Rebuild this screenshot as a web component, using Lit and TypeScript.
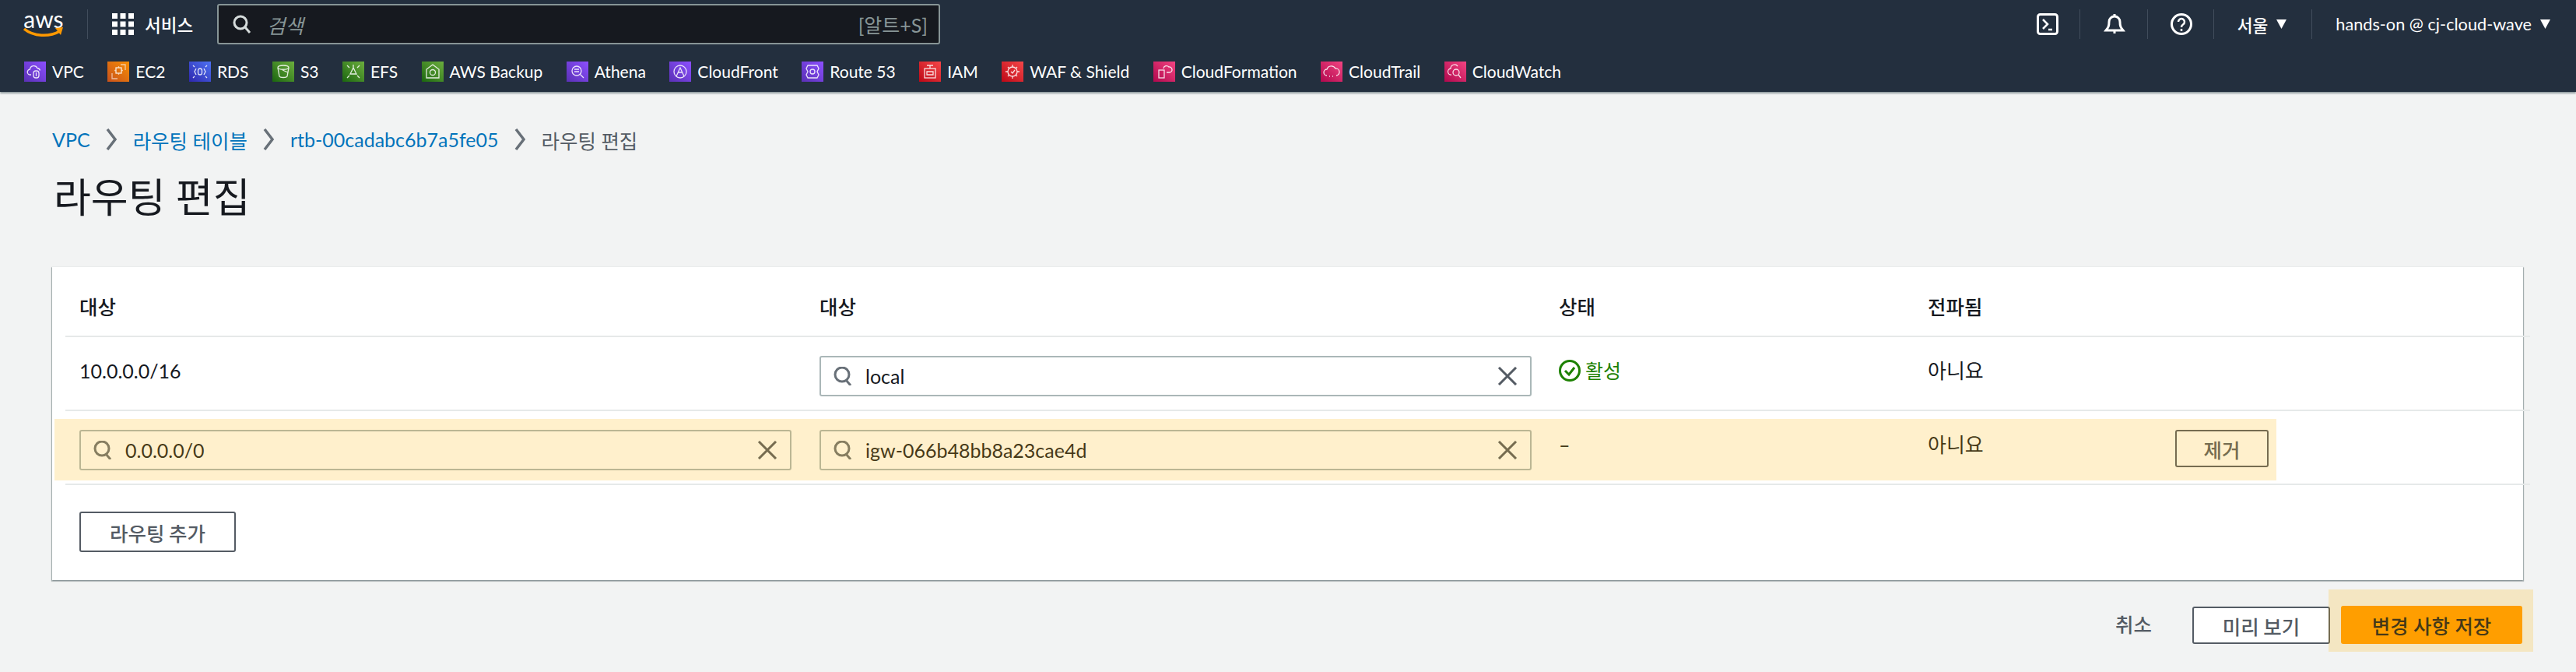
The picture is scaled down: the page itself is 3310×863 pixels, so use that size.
import { LitElement, html, css, svg } from "lit";
import { customElement } from "lit/decorators.js";

const P = ["#8c4fff", "#5a30b5"], O = ["#f78e04", "#c8511b"], B = ["#4d72f3", "#2e27ad"], G = ["#6cae3e", "#1b660f"], R = ["#f54749", "#bd0816"], K = ["#f34482", "#b0084d"];

const glyphs: Record<string, any> = {
  vpc: svg`<path d="M9 17H8a3.5 3.5 0 0 1-.5-7 5 5 0 0 1 9.5-1.5 4 4 0 0 1 3.5 3"/><rect x="12" y="12" width="7" height="9" rx="3"/><path d="M15.5 14v5"/>`,
  ec2: svg`<rect x="11" y="8" width="7" height="7"/><path d="M9 11.500h2M18 11.500h2M14.500 6v2M14.500 15v2M17 4h6v7M6 15v7h7" opacity=".7"/>`,
  rds: svg`<rect x="11.500" y="9" width="5" height="8" rx="2.500"/><path d="M9 9l-2 4 2 4M19 9l2 4-2 4M5 5l2 2M23 5l-2 2M5 21l2-2M23 21l-2-2"/>`,
  s3: svg`<path d="M7 8c0-4 14-4 14 0l-2 11c-1 2-9 2-10 0z"/><path d="M7 8c2 3 12 3 14 0M13 11l7 3"/>`,
  efs: svg`<path d="M14 8l4 8h-8zM14 4v4M6 5l3 3M22 5l-3 3M6 21l3-3M22 21l-3-3"/>`,
  backup: svg`<path d="M14 4l8 6v11H6V10z"/><circle cx="14" cy="14" r="3.500"/>`,
  athena: svg`<circle cx="13" cy="12" r="6"/><path d="M17.500 16.500L22 21M10 10h6M10 13h6"/>`,
  cloudfront: svg`<circle cx="14" cy="13" r="8"/><path d="M9 19l5-11 5 11M11 14h6"/>`,
  route53: svg`<path d="M8 5h12l2 4-2 4 2 4-2 4H8l-2-4 2-4-2-4z"/><circle cx="14" cy="13" r="3"/>`,
  iam: svg`<rect x="7" y="9" width="14" height="12"/><path d="M10 5h8M10 13h8v4h-8zM14 5v4"/>`,
  waf: svg`<circle cx="14" cy="13" r="6"/><path d="M14 4v3M14 19v3M5 13h3M20 13h3M8 7l2 2M20 7l-2 2M8 19l2-2M20 19l-2-2M12 13l2 2 3-4"/>`,
  cfn: svg`<rect x="7" y="11" width="7" height="10"/><path d="M13 9a4 4 0 0 1 7-2 3.500 3.500 0 0 1 1 7h-4"/>`,
  trail: svg`<path d="M8 18a4 4 0 0 1 0-8 6 6 0 0 1 11-1 4.500 4.500 0 0 1 1 9"/><path d="M11 19h1M15 19h1" />`,
  watch: svg`<path d="M9 17a4 4 0 0 1-1-8 5 5 0 0 1 9-3"/><circle cx="15" cy="14" r="4"/><path d="M18 17l3 4"/>`,
};

const services: [string, string, string[]][] = [
  ["VPC", "vpc", P], ["EC2", "ec2", O], ["RDS", "rds", B], ["S3", "s3", G], ["EFS", "efs", G],
  ["AWS Backup", "backup", G], ["Athena", "athena", P], ["CloudFront", "cloudfront", P], ["Route 53", "route53", P],
  ["IAM", "iam", R], ["WAF & Shield", "waf", R], ["CloudFormation", "cfn", K], ["CloudTrail", "trail", K], ["CloudWatch", "watch", K],
];

const searchIcon = html`<svg class="si" viewBox="0 0 26 24"><ellipse cx="11" cy="10" rx="9" ry="9"/><path d="M16 17l6 7"/></svg>`;
const clearIcon = html`<svg class="xi" viewBox="0 0 26 24"><path d="M2 1l22 22M24 1L2 23"/></svg>`;

@customElement("app-root")
export class AppRoot extends LitElement {
  static styles = css`
    :host { display: block; min-height: 863px; background: #f2f3f3; font-family: Lato, "Noto Sans CJK KR", sans-serif; color: #16191f; font-size: 25px; overflow: hidden; }
    header { background: #232f3e; height: 118px; box-shadow: 0 2px 2px rgba(0,28,36,.4); color: #fff; }
    .top { display: flex; align-items: center; height: 62px; }
    .logo { width: 52px; margin-left: 30px; display: flex; flex-direction: column; align-items: center; height: 36px; }
    .logo b { font: 400 30px/22px Lato, sans-serif; color: #fff; }
    .logo svg { width: 52px; height: 13px; }
    .div { width: 1px; height: 38px; background: #414d5c; flex: none; }
    .grid { width: 28px; height: 28px; margin: 0 14px 0 31px; fill: #fff; flex: none; }
    .svc { font-size: 22.500px; width: 64px; margin-right: 29px; font-weight: 500; white-space: nowrap; }
    .search { width: 929px; height: 52px; box-sizing: border-box; background: #16191f; border: 2px solid #879596; border-radius: 3px; display: flex; align-items: center; padding: 0 14px 0 18px; color: #879596; }
    .search svg { width: 24px; height: 24px; fill: none; stroke: #d5dbdb; stroke-width: 3; margin-right: 20px; }
    .search i { flex: 1; font-size: 25.500px; }
    .search span { font-size: 25px; }
    .right { margin-left: auto; display: flex; align-items: center; height: 62px; }
    .ic { width: 28px; height: 28px; fill: none; stroke: #fff; stroke-width: 3; flex: none; }
    .region { font-size: 21.500px; font-weight: 500; display: flex; align-items: center; }
    .user { font-size: 21.700px; display: flex; align-items: center; white-space: nowrap; }
    .tri { width: 13px; height: 12px; fill: #fff; margin-left: 11px; flex: none; }
    .marks { display: flex; align-items: center; height: 26px; margin-top: 17px; padding-left: 31px; gap: 30.500px; }
    .mark { display: flex; align-items: center; gap: 8px; font-size: 21px; line-height: 24px; white-space: nowrap; }
    .mark svg { width: 28px; height: 26px; flex: none; }
    .mark .g { fill: none; stroke: #fff; stroke-width: 1.300; opacity: .85; }
    main { padding: 44px 68px 0 67px; }
    .crumbs { display: flex; align-items: center; height: 34px; font-size: 25.500px; color: #0073bb; }
    .crumbs svg { width: 16px; height: 28px; fill: none; stroke: #687078; stroke-width: 3.500; margin: 0 19.500px; flex: none; }
    .crumbs .now { color: #545b64; }
    .lat { font-size: 25px; }
    h1 { margin: 27px 0 60px 2px; font-size: 52px; line-height: 60px; font-weight: 400; }
    .card { background: #fff; position: relative; height: 402px; box-sizing: border-box; box-shadow: 0 1px 1px 1px rgba(0,28,36,.2), 1px 1px 1px 0 rgba(0,28,36,.15), -1px 1px 1px 0 rgba(0,28,36,.15); }
    .row { display: grid; grid-template-columns: 951px 950px 474px 438px; margin: 0 -9px 0 17px; padding: 24px 0 0 18px; height: 95px; box-sizing: border-box; border-bottom: 2px solid #e6e9e9; }
    .row.head { height: 90px; padding-top: 34px; font-weight: 500; line-height: 34px; font-size: 25.500px; }
    .cell { padding-top: 2px; line-height: 34px; color: #545b64; }
    .txt { color: #16191f; }
    .kr { font-size: 26px; }
    .field { width: 915px; height: 52px; box-sizing: border-box; border: 2px solid #aab7b8; border-radius: 3px; background: #fff; display: flex; align-items: center; padding: 0 16px; color: #16191f; font-size: 25px; }
    .si { width: 26px; height: 24px; fill: none; stroke: #687078; stroke-width: 3; margin-right: 15px; flex: none; }
    .xi { width: 26px; height: 24px; fill: none; stroke: #545b64; stroke-width: 3; margin-left: auto; flex: none; }
    .ok { display: flex; align-items: center; align-self: start; color: #1d8102; gap: 6px; }
    .ok svg { width: 28px; height: 28px; fill: none; stroke: #1d8102; stroke-width: 3; flex: none; }
    .prop { display: flex; align-items: flex-start; justify-content: space-between; }
    .prop span { padding-top: 2px; line-height: 34px; }
    .btn { box-sizing: border-box; border: 2px solid #545b64; border-radius: 3px; background: #fff; color: #545b64; font: 500 25.500px "Noto Sans CJK KR", sans-serif; display: flex; align-items: center; justify-content: center; }
    .rm { width: 120px; height: 48px; }
    .add { width: 201px; height: 52px; margin: 34px 0 0 35px; }
    .tint { position: absolute; left: 3px; top: 195px; width: 2855px; height: 79px; background: rgba(255,180,0,.2); pointer-events: none; }
    .foot { display: flex; justify-content: flex-end; align-items: flex-start; margin: 12px -13px 0 0; font-size: 25.500px; font-weight: 500; }
    .cancel { margin-top: 21px; line-height: 48px; color: #545b64; margin-right: 52px; }
    .prev { width: 177px; height: 48px; margin: 22px -2px 0 0; }
    .savewrap { position: relative; padding: 21px 14px 10px 16px; }
    .savewrap::after { content: ""; position: absolute; inset: 0; background: rgba(255,180,0,.2); pointer-events: none; }
    .save { width: 233px; height: 49px; border-radius: 3px; background: #ff9900; color: #16191f; display: flex; align-items: center; justify-content: center; }
  `;

  private mark(s: [string, string, string[]], i: number) {
    return html`<div class="mark"><svg viewBox="0 0 28 26">
      <defs><linearGradient id="g${i}" x1="0" y1="1" x2="1" y2="0"><stop offset="0" stop-color="${s[2][1]}"/><stop offset="1" stop-color="${s[2][0]}"/></linearGradient></defs>
      <rect width="28" height="26" fill="url(#g${i})"/><g class="g">${glyphs[s[1]]}</g></svg>${s[0]}</div>`;
  }

  private chev() { return html`<svg viewBox="0 0 16 28"><path d="M3 1l10 13L3 27"/></svg>`; }
  private tri() { return html`<svg class="tri" viewBox="0 0 13 12"><path d="M0 0h13L6.500 12z"/></svg>`; }

  render() {
    const g = [0, 1, 2].flatMap((y) => [0, 1, 2].map((x) => svg`<rect x="${x * 10.500}" y="${y * 10.500}" width="7" height="7"/>`));
    return html`
      <header>
        <div class="top">
          <div class="logo"><b>aws</b><svg viewBox="0 0 52 13"><path d="M1 2c12 10 32 11 46 3" fill="none" stroke="#f90" stroke-width="3.500"/><path d="M41 1l10-1-3 10z" fill="#f90"/></svg></div>
          <div class="div" style="margin-left:30px"></div>
          <svg class="grid" viewBox="0 0 28 28">${g}</svg>
          <div class="svc">서비스</div>
          <div class="search">
            <svg viewBox="0 0 24 24"><circle cx="10" cy="10" r="8"/><path d="M16 16l6 7"/></svg>
            <i>검색</i><span>[알트+S]</span>
          </div>
          <div class="right">
            <svg class="ic" viewBox="0 0 28 28"><rect x="1.500" y="1.500" width="25" height="25" rx="3"/><path d="M8 8l6 6-6 6M15 21h5" stroke-width="2.500"/></svg>
            <div class="div" style="margin-left:27px"></div>
            <svg class="ic" style="margin-left:30px" viewBox="0 0 28 28"><path d="M3 22c3-4 4-5 4-11a7 7 0 0 1 14 0c0 6 1 7 4 11z"/><path d="M14 1v3M14 22v4" /></svg>
            <div class="div" style="margin-left:28px"></div>
            <svg class="ic" style="margin-left:29px" viewBox="0 0 28 28"><circle cx="14" cy="14" r="12.500"/><path d="M10 11a4 4 0 1 1 6 3.500c-1.500 1-2 1.500-2 3.500M14 20v3" stroke-width="2.500"/></svg>
            <div class="div" style="margin-left:27px"></div>
            <div class="region" style="margin-left:30px">서울${this.tri()}</div>
            <div class="div" style="margin-left:32px"></div>
            <div class="user" style="margin:0 33px 0 30px">hands-on @ cj-cloud-wave${this.tri()}</div>
          </div>
        </div>
        <div class="marks">${services.map((s, i) => this.mark(s, i))}</div>
      </header>
      <main>
        <div class="crumbs">
          <span class="lat">VPC</span>${this.chev()}<span>라우팅 테이블</span>${this.chev()}<span class="lat">rtb-00cadabc6b7a5fe05</span>${this.chev()}<span class="now">라우팅 편집</span>
        </div>
        <h1>라우팅 편집</h1>
        <section class="card">
          <div class="row head"><div>대상</div><div>대상</div><div>상태</div><div>전파됨</div></div>
          <div class="row">
            <div class="cell txt">10.0.0.0/16</div>
            <div><div class="field">${searchIcon}local${clearIcon}</div></div>
            <div class="cell ok"><svg viewBox="0 0 28 28"><circle cx="14" cy="14" r="12.500"/><path d="M8 14l5 5 7-9"/></svg>활성</div>
            <div class="cell txt kr">아니요</div>
          </div>
          <div class="row">
            <div><div class="field">${searchIcon}0.0.0.0/0${clearIcon}</div></div>
            <div><div class="field">${searchIcon}igw-066b48bb8a23cae4d${clearIcon}</div></div>
            <div class="cell txt">–</div>
            <div class="prop txt kr"><span>아니요</span><div class="btn rm">제거</div></div>
          </div>
          <div class="btn add">라우팅 추가</div>
          <div class="tint"></div>
        </section>
        <div class="foot">
          <div class="cancel">취소</div>
          <div class="btn prev">미리 보기</div>
          <div class="savewrap"><div class="save">변경 사항 저장</div></div>
        </div>
      </main>`;
  }
}
